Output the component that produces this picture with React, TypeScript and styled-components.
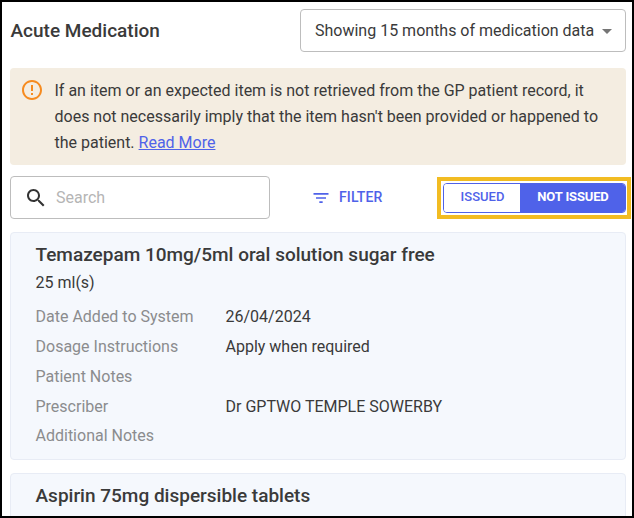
import React from "react";
import styled, { createGlobalStyle, css } from "styled-components";

const GlobalStyle = createGlobalStyle`
  * { box-sizing: border-box; }
  body { margin: 0; background: #fff; font-family: Roboto, sans-serif; overflow: hidden; }
`;

const Frame = styled.main`
  width: 634px;
  height: 518px;
  border: 2px solid #000;
  padding: 7px 6px 0 8px;
  overflow: hidden;
  background: #fff;
  color: #3a3a3a;
  font-size: 16px;
`;

const Header = styled.header`
  display: flex;
  justify-content: space-between;
  height: 43px;
`;

const Title = styled.h1`
  margin: 0;
  padding-left: 0.5px;
  font-size: 19px;
  font-weight: 500;
  line-height: 43px;
`;

const Select = styled.button`
  display: flex;
  align-items: center;
  justify-content: space-between;
  width: 326px;
  padding: 0 13px 0 14px;
  border: 1px solid #bdbdbd;
  border-radius: 4px;
  background: #fff;
  color: inherit;
  font: inherit;

  svg { margin-top: 2px; }
`;

const Alert = styled.section`
  display: flex;
  height: 97px;
  margin-top: 16px;
  padding: 10px 12px 8px;
  border-radius: 4px;
  background: #f4ede1;

  svg { flex: none; margin: 0 10.5px 0 -2px; }
`;

const AlertText = styled.p`
  margin: 0;
  line-height: 26px;
  white-space: nowrap;
`;

const Link = styled.a`
  color: #4f62e9;
  text-decoration: underline;
`;

const Toolbar = styled.div`
  display: flex;
  align-items: center;
  height: 43px;
  margin-top: 11px;
`;

const Search = styled.label`
  display: flex;
  align-items: center;
  width: 260px;
  height: 43px;
  padding-left: 13px;
  border: 1px solid #bdbdbd;
  border-radius: 4px;

  input {
    width: 180px;
    margin-left: 8px;
    padding: 0;
    border: 0;
    outline: 0;
    background: none;
    font: inherit;
  }
  input::placeholder { color: #b5b5b5; opacity: 1; }
`;

const FilterButton = styled.button`
  display: flex;
  align-items: center;
  gap: 8px;
  margin: -1px 0 0 41px;
  padding: 0;
  border: 0;
  background: none;
  color: #4f62e9;
  font: 500 14px Roboto, sans-serif;
  letter-spacing: 0.1px;

  svg { margin-top: 1px; }
`;

const Highlight = styled.div`
  flex: none;
  width: 194px;
  height: 42px;
  margin: 0 -5px 0 auto;
  padding: 2px 1px 2px 2px;
  border: 4px solid #f2bc22;
`;

const ToggleGroup = styled.div`
  display: flex;
  width: 183px;
  height: 30px;
  border: 1px solid #4f62e9;
  border-radius: 4px;
  overflow: hidden;
`;

const Toggle = styled.button<{ $width: number; $active?: boolean }>`
  width: ${(p) => p.$width}px;
  padding: 0 0 2px 1px;
  border: 0;
  background: #fff;
  color: #4f62e9;
  font: 500 13px Roboto, sans-serif;
  ${(p) => p.$active && css`
    background: #4f62e9;
    color: #fff;
    font-weight: 700;
    letter-spacing: -0.15px;
  `}
`;

const Card = styled.article`
  height: 228px;
  margin-top: 13px;
  padding: 8px 24.5px 0;
  border: 1px solid #e8ecf5;
  border-radius: 4px;
  background: #f5f8fd;
`;

const CardTitle = styled.h2`
  margin: 0;
  font-size: 19px;
  font-weight: 500;
  line-height: 27px;
`;

const Quantity = styled.p`
  margin: 0 0 5px;
  line-height: 29px;
`;

const Details = styled.dl`
  display: grid;
  grid-template-columns: 190px 1fr;
  grid-auto-rows: 29.85px;
  margin: 0;
  line-height: 30px;

  dt { color: #8b8c8e; }
  dd { margin: 0; }
`;

interface Medication {
  name: string;
  quantity?: string;
  details?: [string, string][];
}

const medications: Medication[] = [
  {
    name: "Temazepam 10mg/5ml oral solution sugar free",
    quantity: "25 ml(s)",
    details: [
      ["Date Added to System", "26/04/2024"],
      ["Dosage Instructions", "Apply when required"],
      ["Patient Notes", ""],
      ["Prescriber", "Dr GPTWO TEMPLE SOWERBY"],
      ["Additional Notes", ""],
    ],
  },
  { name: "Aspirin 75mg dispersible tablets" },
];

export default function App() {
  return (
    <>
      <GlobalStyle />
      <Frame>
        <Header>
          <Title>Acute Medication</Title>
          <Select>
            Showing 15 months of medication data
            <svg width="10" height="5" viewBox="0 0 10 5"><path d="M0 0h10L5 5z" fill="#757575" /></svg>
          </Select>
        </Header>
        <Alert>
          <svg width="24" height="24" viewBox="0 0 24 24" fill="#f68b1f">
            <path d="M11 15h2v2h-2zm0-8h2v6h-2zm.99-5C6.47 2 2 6.48 2 12s4.47 10 9.99 10C17.52 22 22 17.52 22 12S17.52 2 11.99 2zM12 20c-4.42 0-8-3.58-8-8s3.58-8 8-8 8 3.58 8 8-3.58 8-8 8z" />
          </svg>
          <AlertText>
            If an item or an expected item is not retrieved from the GP patient record, it<br />
            does not necessarily imply that the item hasn't been provided or happened to<br />
            the patient. <Link>Read More</Link>
          </AlertText>
        </Alert>
        <Toolbar>
          <Search>
            <svg width="24" height="24" viewBox="0 0 24 24" fill="#333">
              <path d="M15.5 14h-.79l-.28-.27C15.41 12.59 16 11.11 16 9.5 16 5.91 13.09 3 9.5 3S3 5.91 3 9.5 5.91 16 9.5 16c1.61 0 3.09-.59 4.23-1.57l.27.28v.79l5 4.99L20.49 19l-4.99-5zm-6 0C7.01 14 5 11.99 5 9.5S7.01 5 9.5 5 14 7.01 14 9.5 11.99 14 9.5 14z" />
            </svg>
            <input placeholder="Search" />
          </Search>
          <FilterButton>
            <svg width="20" height="20" viewBox="0 0 24 24" fill="currentColor">
              <path d="M10 18h4v-2h-4v2zM3 6v2h18V6H3zm3 7h12v-2H6v2z" />
            </svg>
            FILTER
          </FilterButton>
          <Highlight>
            <ToggleGroup>
              <Toggle $width={76}>ISSUED</Toggle>
              <Toggle $width={105} $active>NOT ISSUED</Toggle>
            </ToggleGroup>
          </Highlight>
        </Toolbar>
        {medications.map((m) => (
          <Card key={m.name}>
            <CardTitle>{m.name}</CardTitle>
            {m.quantity && <Quantity>{m.quantity}</Quantity>}
            {m.details && (
              <Details>
                {m.details.map(([label, value]) => (
                  <React.Fragment key={label}>
                    <dt>{label}</dt>
                    <dd>{value}</dd>
                  </React.Fragment>
                ))}
              </Details>
            )}
          </Card>
        ))}
      </Frame>
    </>
  );
}
